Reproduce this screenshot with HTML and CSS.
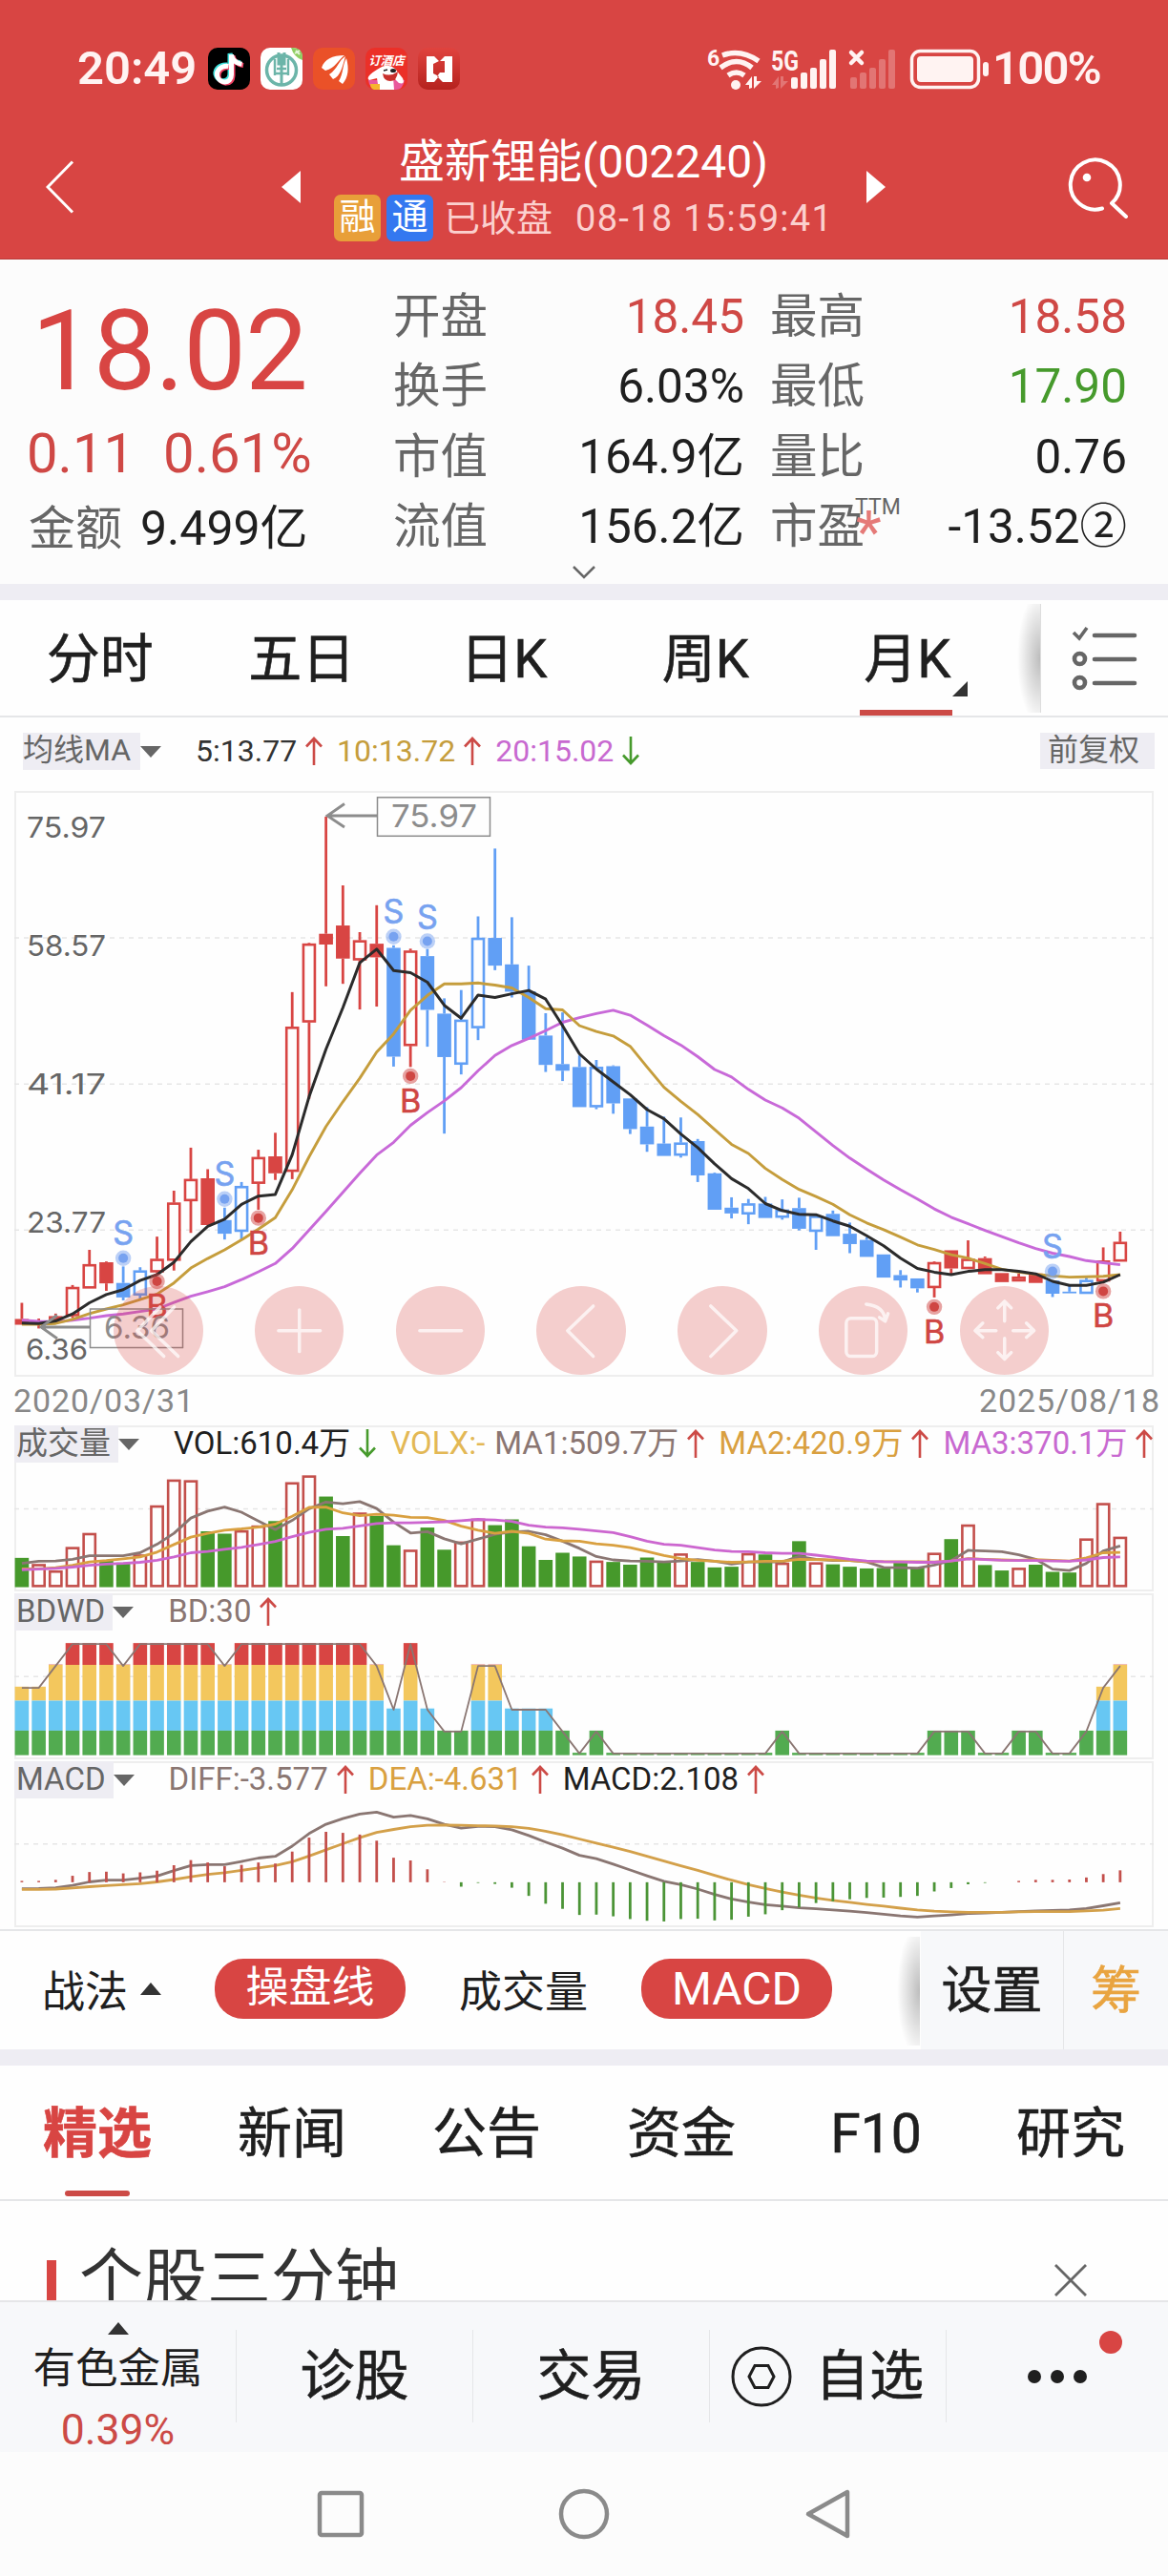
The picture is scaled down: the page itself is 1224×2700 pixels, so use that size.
FILE: index.html
```html
<!DOCTYPE html>
<html lang="zh-CN">
<head>
  <meta charset="UTF-8" />
  <title>盛新锂能(002240)</title>
  <link rel="stylesheet" href="styles.css">
</head>
<body>
  <!-- shared icons -->
  <svg class="defs">
    <symbol id="arrow-up" viewBox="0 0 18 30"><path d="M9 30V2M1 10.500L9 2l8 8.500" fill="none" stroke="#cc4a46" stroke-width="2.600"/></symbol>
    <symbol id="arrow-down" viewBox="0 0 18 30"><path d="M9 0v28M1 19.500L9 28l8-8.500" fill="none" stroke="#469a2c" stroke-width="2.600"/></symbol>
    <linearGradient id="red-app" x1="0" y1="0" x2="0" y2="1">
      <stop offset="0" stop-color="#e0433e"/><stop offset="1" stop-color="#b5221e"/>
    </linearGradient>
  </svg>

  <header class="header">
    <div class="status-bar">
      <span class="time">20:49</span>
      <div class="apps">
        <svg viewBox="0 0 44 44">
          <rect width="44" height="44" rx="10" fill="#000"/>
          <g fill="none" stroke-width="5">
            <path d="M21 19c-8-1-13 5-12 10 2 9 15 9 15-1V7c1 6 5 9 11 10" stroke="#3fe0dc" transform="translate(-1 -1)"/>
            <path d="M21 19c-8-1-13 5-12 10 2 9 15 9 15-1V7c1 6 5 9 11 10" stroke="#ef4063" transform="translate(2 1.500)"/>
            <path d="M21 19c-8-1-13 5-12 10 2 9 15 9 15-1V7c1 6 5 9 11 10" stroke="#fff" transform="translate(.5 .3)"/>
          </g>
        </svg>
        <svg viewBox="0 0 44 44">
          <rect width="44" height="44" rx="10" fill="#fff"/>
          <path d="M32 0h2q10 0 10 10v3Q35 10 32 0Z" fill="#8fce62"/>
          <path d="M36 6l5-3M37 3l4 4" stroke="#e5f5da" stroke-width="2"/>
          <circle cx="22" cy="23.500" r="15.500" fill="none" stroke="#6cb5a9" stroke-width="3.500"/>
          <path d="M19 5v12h6V5M22 8v31" fill="none" stroke="#6cb5a9" stroke-width="3"/>
          <path d="M15 12v17M29 12v17M15 27h14M17 22h10" fill="none" stroke="#6cb5a9" stroke-width="2.400"/>
        </svg>
        <svg viewBox="0 0 44 44">
          <rect width="44" height="44" rx="10" fill="#ea5128"/>
          <g fill="#fff">
            <path d="M9 21C12 12 20 8 33 8C26 13 24 21 13 24Z"/>
            <path d="M17 28C26 22 27 13 34 9C31 19 29 30 21 33Z"/>
            <path d="M27 35C32 27 31 17 35 11C38 22 37 31 31 38Z"/>
          </g>
        </svg>
        <svg viewBox="0 0 44 44">
          <rect width="44" height="44" rx="10" fill="#eb3028"/>
          <path d="M3 34h38q-2 10-9 10H11Q4 42 3 34Z" fill="#e9599c"/>
          <path d="M12 23Q23 15 31 22l8 10q3 7-4 5l-6-6 1 13H14l-2-12-8 2q-5-3 8-11Z" fill="#fff"/>
          <path d="M18 27q8 4 16-2-1 10-8 10t-8-8Z" fill="#c9302c"/>
          <ellipse cx="29" cy="24" rx="3" ry="2" fill="#222"/>
          <path d="M19 24l4-1" stroke="#222" stroke-width="1.500"/>
          <path d="M5 38h10v6H9q-4-1-4-6Z" fill="#f6b52e"/>
          <text x="22" y="18" font-size="12.500" text-anchor="middle" fill="#fff" font-weight="700" font-style="italic">订酒店</text>
        </svg>
        <svg viewBox="0 0 44 44">
          <rect width="44" height="44" rx="10" fill="url(#red-app)"/>
          <path d="M9 9h8l5 5-6 3v10l6 3-5 6H9ZM36 9h-8l-5 5h5v12h-5l-3 4 6 6h10Z" fill="#fff"/>
        </svg>
      </div>
      <svg class="signals" viewBox="0 0 310 60">
        <g fill="#fff3f2">
          <text x="11" y="27" font-size="23" font-weight="700">6</text>
          <text x="78" y="32" font-size="29" font-weight="700" textLength="29" lengthAdjust="spacingAndGlyphs">5G</text>
          <circle cx="41" cy="47" r="5"/>
          <path d="M58 50V38l-7 9h4v4zM60 38v13l8-8h-5v-5z"/>
          <rect x="99" y="39" width="7" height="12" rx="2"/>
          <rect x="109" y="34" width="7" height="17" rx="2"/>
          <rect x="119" y="29" width="7" height="22" rx="2"/>
          <rect x="129" y="20" width="7" height="31" rx="2"/>
          <rect x="139" y="10" width="7" height="41" rx="2"/>
          <rect x="231" y="17" width="59" height="27" rx="4"/>
          <rect x="300" y="23" width="6" height="15" rx="3"/>
        </g>
        <g fill="#fff3f2" opacity=".28">
          <path d="M86 50V38l-7 9h4v4zM88 38v13l8-8h-5v-5z"/>
          <rect x="161" y="39" width="7" height="12" rx="2"/>
          <rect x="171" y="34" width="7" height="17" rx="2"/>
          <rect x="181" y="29" width="7" height="22" rx="2"/>
          <rect x="191" y="20" width="7" height="31" rx="2"/>
          <rect x="201" y="10" width="7" height="41" rx="2"/>
        </g>
        <g fill="none" stroke="#fff3f2">
          <path d="M27 16Q46 9 65 22M25 29Q42 16 58 29M33 37Q42 31 50 37" stroke-width="5.500"/>
          <path d="M162 13l11 11M173 13l-11 11" stroke-width="4.500" stroke-linecap="round"/>
          <rect x="225.500" y="11.500" width="70" height="38" rx="9" stroke-width="3.500"/>
        </g>
      </svg>
      <span class="battery">100%</span>
    </div>
    <div class="title-bar">
      <svg class="back" viewBox="0 0 30 56"><path d="M28 1.500L2 28l26 26.500" fill="none" stroke="#fff" stroke-width="3"/></svg>
      <svg class="prev" viewBox="0 0 20 34"><path d="M20 0v34L0 17Z" fill="#fff"/></svg>
      <div class="title">
        <h1>盛新锂能(002240)</h1>
        <div class="subtitle">
          <span class="tag tag-margin">融</span>
          <span class="tag tag-connect">通</span>
          <span class="market-state">已收盘</span>
          <span class="market-time">08-18 15:59:41</span>
        </div>
      </div>
      <svg class="next" viewBox="0 0 20 34"><path d="M0 0v34l20-17Z" fill="#fff"/></svg>
      <svg class="search" viewBox="0 0 64 64">
        <path d="M36 53.500A26 26 0 1 1 46 48l15 14" fill="none" stroke="#fff" stroke-width="4" stroke-linecap="round" stroke-linejoin="round"/>
        <circle cx="20" cy="21" r="4.300" fill="#fff"/>
      </svg>
    </div>
  </header>

  <section class="quote">
    <div class="quote-main">
      <div class="price">18.02</div>
      <div class="change"><span>0.11</span><span>0.61%</span></div>
      <div class="amount"><label>金额</label><b>9.499亿</b></div>
    </div>
    <dl class="quote-col col-a">
      <div><dt>开盘</dt><dd class="up">18.45</dd></div>
      <div><dt>换手</dt><dd>6.03%</dd></div>
      <div><dt>市值</dt><dd>164.9亿</dd></div>
      <div><dt>流值</dt><dd>156.2亿</dd></div>
    </dl>
    <dl class="quote-col col-b">
      <div><dt>最高</dt><dd class="up">18.58</dd></div>
      <div><dt>最低</dt><dd class="down">17.90</dd></div>
      <div><dt>量比</dt><dd>0.76</dd></div>
      <div><dt>市盈<sup>TTM</sup><i>*</i></dt><dd>-13.52②</dd></div>
    </dl>
    <svg class="more" viewBox="0 0 24 14"><path d="M1 1l11 11L23 1" fill="none" stroke="#666" stroke-width="2.500"/></svg>
  </section>

  <nav class="period-tabs">
    <a>分时</a>
    <a>五日</a>
    <a>日K</a>
    <a>周K</a>
    <a class="active">月K</a>
    <div class="list-btn">
      <svg viewBox="0 0 70 68" fill="none" stroke="#666" stroke-width="4.600">
        <path d="M2 7l6 6L16 2" stroke-width="3.600"/>
        <path d="M24 10h42M24 35h42M24 60h42" stroke-linecap="round"/>
        <circle cx="8.500" cy="34.500" r="5.500"/><circle cx="8.500" cy="59.500" r="5.500"/>
      </svg>
    </div>
  </nav>

  <div class="ma-row">
    <span class="picker">均线MA</span><i class="caret"></i>
    <span class="val dark">5:13.77</span><svg class="arr"><use href="#arrow-up"/></svg>
    <span class="val gold">10:13.72</span><svg class="arr"><use href="#arrow-up"/></svg>
    <span class="val pink">20:15.02</span><svg class="arr"><use href="#arrow-down"/></svg>
    <span class="adjust">前复权</span>
  </div>

  <div class="kline">
    <svg id="kline-chart" viewBox="15 0 1194 614"></svg>
    <div class="tools">
      <button><svg viewBox="0 0 94 94"><path d="M49 22L25 47l28 27M64 22L40 47l28 27"/></svg></button>
      <button><svg viewBox="0 0 94 94"><path d="M25 47h44M47 25v44"/></svg></button>
      <button><svg viewBox="0 0 94 94"><path d="M25 47h44"/></svg></button>
      <button><svg viewBox="0 0 94 94"><path d="M60 21L33 47l27 27"/></svg></button>
      <button><svg viewBox="0 0 94 94"><path d="M35 21l27 26-27 27"/></svg></button>
      <button><svg viewBox="0 0 94 94"><rect x="29" y="34" width="32" height="40" rx="5"/><path d="M50 19q19 2 20 17M64 33l6 4 3-8"/></svg></button>
      <button><svg viewBox="0 0 94 94"><path d="M47 37V17M40 23l7-7 7 7M47 55v20M40 70l7 7 7-7M38 47H17M24 39l-8 8 8 7M56 47h20M70 39l8 8-8 7"/></svg></button>
    </div>
  </div>
  <div class="dates"><span>2020/03/31</span><span>2025/08/18</span></div>

  <div class="panel">
    <div class="panel-head">
      <span class="picker">成交量</span><i class="caret"></i>
      <span class="val black">VOL:610.4万</span><svg class="arr"><use href="#arrow-down"/></svg>
      <span class="val yellow">VOLX:-</span>
      <span class="val brown ma1">MA1:509.7万</span><svg class="arr"><use href="#arrow-up"/></svg>
      <span class="val orange">MA2:420.9万</span><svg class="arr"><use href="#arrow-up"/></svg>
      <span class="val pink">MA3:370.1万</span><svg class="arr"><use href="#arrow-up"/></svg>
    </div>
    <svg id="vol-chart" viewBox="15 39 1194 135"></svg>
  </div>

  <div class="panel">
    <div class="panel-head">
      <span class="picker">BDWD</span><i class="caret"></i>
      <span class="val brown">BD:30</span><svg class="arr"><use href="#arrow-up"/></svg>
    </div>
    <svg id="bdwd-chart" viewBox="15 39 1194 135"></svg>
  </div>

  <div class="panel">
    <div class="panel-head">
      <span class="picker">MACD</span><i class="caret"></i>
      <span class="val brown">DIFF:-3.577</span><svg class="arr"><use href="#arrow-up"/></svg>
      <span class="val orange">DEA:-4.631</span><svg class="arr"><use href="#arrow-up"/></svg>
      <span class="val black">MACD:2.108</span><svg class="arr"><use href="#arrow-up"/></svg>
    </div>
    <svg id="macd-chart" viewBox="15 39 1194 135"></svg>
  </div>

  <div class="indicator-bar">
    <span class="strategy">战法</span><i class="caret caret-up"></i>
    <span class="pill">操盘线</span>
    <span class="plain">成交量</span>
    <span class="pill pill-macd">MACD</span>
    <div class="indicator-side">
      <span>设置</span>
      <span class="chip">筹</span>
    </div>
  </div>

  <nav class="info-tabs">
    <a class="active">精选</a>
    <a>新闻</a>
    <a>公告</a>
    <a>资金</a>
    <a>F10</a>
    <a>研究</a>
  </nav>

  <section class="brief">
    <i class="mark"></i>
    <h2>个股三分钟</h2>
    <svg viewBox="0 0 34 34"><path d="M1 1l32 32M33 1L1 33" stroke="#666" stroke-width="2.800"/></svg>
  </section>

  <footer class="bottom-bar">
    <div class="sector">
      <i class="caret caret-up"></i>
      <span>有色金属</span>
      <em>0.39%</em>
    </div>
    <div>诊股</div>
    <div>交易</div>
    <div class="watch">
      <svg viewBox="0 0 64 64" fill="none" stroke="#1f1f1f" stroke-width="3">
        <circle cx="32" cy="32" r="30"/><path d="M25 20.500h14L45 32l-6 11.500H25L19 32Z"/>
      </svg>
      <span>自选</span>
    </div>
    <div class="dots">
      <svg viewBox="0 0 64 16" fill="#1f1f1f"><circle cx="8" cy="8" r="7"/><circle cx="32" cy="8" r="7"/><circle cx="56" cy="8" r="7"/></svg>
      <i class="badge"></i>
    </div>
  </footer>

  <div class="system-nav">
    <svg viewBox="0 0 56 56"><rect x="6" y="6" width="44" height="44" rx="2"/></svg>
    <svg viewBox="0 0 56 56"><circle cx="28" cy="28" r="24"/></svg>
    <svg viewBox="0 0 56 56"><path d="M49 5v46L8 28Z" stroke-linejoin="round"/></svg>
  </div>

  <script src="charts.js"></script>
</body>
</html>
```
FILE: styles.css
```css
* {
  box-sizing: border-box;
}
body {
  margin: 0;
  width: 1224px;
  height: 2700px;
  overflow: hidden;
  background: #fefefe;
  color: #1f1f1f;
  font-family: Roboto, "Noto Sans CJK SC", sans-serif;
}
h1, h2, dl, dd {
  margin: 0;
  font-weight: 400;
}
i, em {
  font-style: normal;
}
svg {
  display: block;
  flex: none;
}
svg.defs {
  position: absolute;
  width: 0;
  height: 0;
}

/* Header */
.header {
  height: 272px;
  background: #d84543;
  border-bottom: 1px solid #b93c3a;
  color: #fff;
}
.status-bar {
  height: 142px;
  display: flex;
  align-items: center;
  padding: 1px 0 0 81px;
  color: #fff3f2;
}
.time, .battery {
  font-size: 49px;
  font-weight: 600;
  line-height: 60px;
}
.time {
  width: 137px;
}
.apps {
  display: flex;
  gap: 11px;
  width: 512px;
}
.apps svg {
  width: 44px;
  height: 44px;
}
.signals {
  width: 310px;
  height: 60px;
}
.battery {
  letter-spacing: -1.8px;
}
.title-bar {
  height: 120px;
  display: flex;
  align-items: center;
  padding: 0 41px 0 48px;
}
.back {
  width: 30px;
  height: 56px;
  margin-bottom: 12px;
}
.prev, .next {
  width: 20px;
  height: 34px;
  margin-bottom: 12px;
}
.prev {
  margin-left: 217px;
}
.next {
  margin-right: 191px;
}
.title {
  flex: 1;
  text-align: center;
}
.title h1 {
  font-size: 48px;
  line-height: 58px;
  margin-top: -10px;
}
.subtitle {
  display: flex;
  align-items: center;
  margin: 5px 0 0 35px;
  font-size: 38px;
  line-height: 50px;
  color: #fbd0ce;
  white-space: nowrap;
}
.tag {
  width: 49px;
  height: 49px;
  border-radius: 7px;
  color: #fff;
  line-height: 47px;
  margin-right: 6px;
}
.tag-margin {
  background: #e89f39;
}
.tag-connect {
  background: #3478f0;
}
.market-state {
  margin-left: 5px;
}
.market-time {
  margin-left: 24px;
  letter-spacing: 1.3px;
}
.search {
  width: 64px;
  height: 64px;
  margin-bottom: 10px;
}

/* Quote summary */
.quote {
  position: relative;
  height: 340px;
  display: flex;
  background: #fcfcfc;
  color: #1f1f1f;
}
.quote-main {
  width: 412px;
  padding: 27px 0 0 30px;
}
.price {
  margin-left: 3px;
  font-size: 117px;
  line-height: 138px;
  letter-spacing: -1px;
  color: #d84543;
}
.change {
  display: flex;
  gap: 30px;
  height: 77px;
  margin-left: -2px;
  font-size: 58px;
  line-height: 77px;
  color: #cf4845;
}
.amount {
  display: flex;
  font-size: 50px;
  line-height: 81px;
}
.amount label {
  width: 117px;
  font-size: 49px;
  color: #666;
}
.amount b {
  font-weight: 400;
}
.quote-col {
  padding-top: 24px;
  font-size: 49.500px;
  line-height: 73.300px;
}
.quote-col > div {
  display: flex;
  justify-content: space-between;
}
.col-a {
  width: 368px;
}
.col-b {
  width: 374px;
  margin-left: 27px;
}
.quote-col dt {
  position: relative;
  color: #666;
}
.quote-col sup {
  position: absolute;
  left: 89px;
  top: 4px;
  font-size: 23px;
  line-height: 24px;
}
.quote-col i {
  position: absolute;
  left: 90px;
  top: 11px;
  font-size: 62px;
  line-height: 62px;
  color: #e57a78;
}
.up {
  color: #cf4845;
}
.down {
  color: #469a2c;
}
.more {
  position: absolute;
  left: 600px;
  top: 321px;
  width: 24px;
  height: 14px;
}

/* Period tabs */
.period-tabs {
  position: relative;
  height: 140px;
  display: flex;
  border-top: 17px solid #eeedf3;
  border-bottom: 2px solid #e5e6e8;
  font-size: 56px;
  line-height: 124px;
  text-align: center;
}
.period-tabs, .info-tabs, .indicator-side, .bottom-bar > div {
  -webkit-text-stroke: 0.6px;
}
.period-tabs a {
  width: 211.5px;
  position: relative;
  left: -1px;
}
.period-tabs .active::before {
  content: "";
  position: absolute;
  left: 56px;
  bottom: 0;
  width: 97px;
  height: 6px;
  background: #cc4a46;
}
.period-tabs .active::after {
  content: "";
  position: absolute;
  left: 153px;
  top: 85px;
  border-left: 16px solid transparent;
  border-bottom: 16px solid #333;
}
.list-btn {
  position: absolute;
  right: 0;
  top: 4px;
  width: 134px;
  height: 114px;
  border-left: 1px solid #ddd;
  background: #fefefe;
}
.list-btn::before,
.indicator-side::before {
  content: "";
  position: absolute;
  left: -25px;
  top: 0;
  width: 24px;
  height: 114px;
  background: radial-gradient(ellipse 24px 70px at right, rgba(0, 0, 0, 0.26), transparent);
}
.list-btn svg {
  width: 70px;
  height: 68px;
  margin: 23px 0 0 32px;
}

/* Indicator readouts */
.ma-row {
  height: 77px;
  display: flex;
  padding: 16px 14px 0 24px;
  font-size: 32px;
  line-height: 38px;
}
.picker {
  height: 39px;
  line-height: 37px;
  background: #eeedf3;
  color: #666;
}
.ma-row .picker {
  width: 123px;
}
.caret {
  flex: none;
  width: 0;
  height: 0;
  border: 11px solid transparent;
  border-top: 12px solid #666;
  border-bottom: 0;
}
.caret-up {
  border-top: 0;
  border-bottom: 13px solid #333;
}
.ma-row .caret, .panel-head .caret {
  margin-top: 14px;
}
.val {
  white-space: nowrap;
  margin-left: 15px;
}
.caret + .val {
  margin-left: 36px;
}
.arr {
  width: 18px;
  height: 30px;
  margin: 4px 0 0 9px;
}
.dark { color: #333; }
.black { color: #1f1f1f; }
.gold { color: #c59d3c; }
.yellow { color: #e3b855; }
.orange { color: #d9a040; }
.pink { color: #c869d0; }
.brown { color: #8a7672; }
.adjust {
  margin-left: auto;
  width: 120px;
  height: 38px;
  padding-left: 8px;
  background: #eeedf3;
  color: #666;
  line-height: 36px;
  white-space: nowrap;
}

/* Candles */
.kline {
  position: relative;
  height: 614px;
  margin: 0 15px;
  border: 2px solid #eee;
}
.kline > svg {
  width: 1194px;
  height: 614px;
  margin: -2px;
}
.kline text {
  font-family: Inter, sans-serif;
}
.tools {
  position: absolute;
  left: 102px;
  bottom: 0;
  display: flex;
  gap: 54.3px;
}
.tools button {
  width: 93.500px;
  height: 93.500px;
  padding: 0;
  border: 0;
  border-radius: 50%;
  background: rgba(216, 69, 67, 0.26);
}
.tools path, .tools rect {
  fill: none;
  stroke: #fff;
  stroke-opacity: 0.72;
  stroke-width: 3.500;
  stroke-linecap: round;
  stroke-linejoin: round;
}
.dates {
  height: 51px;
  display: flex;
  justify-content: space-between;
  padding: 0 8px 0 14px;
  font-size: 34px;
  line-height: 51px;
  letter-spacing: 0.9px;
  color: #888;
}

/* Sub charts */
.panel {
  height: 174px;
  margin: 0 15px 2px;
  box-shadow: inset 0 0 0 2px #eee;
}
.panel-head {
  display: flex;
  height: 39px;
  font-size: 33px;
  line-height: 38px;
}
.panel-head .picker {
  padding: 0 8px 0 2px;
}
.panel > svg {
  width: 1194px;
  height: 135px;
}
.panel-head .ma1 {
  margin-left: 10px;
}

/* Indicator switcher */
.indicator-bar {
  position: relative;
  height: 126px;
  display: flex;
  align-items: center;
  padding: 0 0 3px 44px;
  border-top: 2px solid #e5e6e8;
  font-size: 45px;
}
.indicator-bar .caret {
  margin-left: 13px;
}
.pill {
  height: 63px;
  width: 200px;
  margin-left: 56px;
  border-radius: 30px;
  background: #d84543;
  color: #fff;
  line-height: 61px;
  text-align: center;
}
.plain {
  margin-left: 56px;
}
.pill-macd {
  font-size: 48px;
  line-height: 63px;
}
.indicator-side {
  position: absolute;
  right: 0;
  top: 0;
  width: 259px;
  height: 124px;
  display: flex;
  background: #f7f8fa;
  font-size: 53px;
  line-height: 127px;
  text-align: center;
}
.indicator-side::before {
  top: 6px;
}
.indicator-side span:first-child {
  width: 150px;
  border-right: 1px solid #e5e6e8;
}
.indicator-side .chip {
  flex: 1;
  color: #e9a440;
}

/* Info tabs */
.info-tabs {
  height: 159px;
  display: flex;
  border-top: 17px solid #eeedf3;
  border-bottom: 2px solid #e5e6e8;
  font-size: 57px;
  line-height: 144px;
  text-align: center;
}
.info-tabs a {
  position: relative;
  width: 204px;
}
.info-tabs .active {
  font-weight: 700;
  color: #d84543;
}
.info-tabs .active::after {
  content: "";
  position: absolute;
  left: 68px;
  bottom: 3px;
  width: 68px;
  height: 6px;
  border-radius: 3px;
  background: #cc4a46;
}

/* Brief */
.brief {
  height: 104px;
  display: flex;
  overflow: hidden;
  padding: 0 85px 0 49px;
}
.mark {
  width: 10px;
  height: 60px;
  margin-top: 62px;
  background: #d84543;
}
.brief h2 {
  flex: 1;
  margin: 33px 0 0 24px;
  font-size: 67px;
  line-height: 98px;
  color: #333;
}
.brief svg {
  width: 34px;
  height: 34px;
  margin-top: 66px;
}

/* Bottom bar */
.bottom-bar {
  height: 159px;
  display: flex;
  background: #f7f8fa;
  border-top: 2px solid #e5e6e8;
  font-size: 57px;
  line-height: 97px;
  text-align: center;
}
.bottom-bar > div {
  position: relative;
  width: 248px;
  height: 97px;
  margin-top: 29px;
  border-right: 1px solid #e5e6e8;
}
.bottom-bar > .dots {
  width: 232px;
  border: 0;
}
.bottom-bar > .sector {
  display: flex;
  flex-direction: column;
  align-items: center;
  font-size: 44.500px;
  line-height: 64px;
  -webkit-text-stroke: 0;
}
.sector .caret {
  margin-top: -8px;
}
.sector span {
  margin-top: 4px;
}
.sector em {
  color: #cc4a46;
}
.watch {
  display: flex;
  align-items: center;
  padding-left: 22px;
}
.watch svg {
  width: 64px;
  height: 64px;
}
.watch span {
  margin-left: 24px;
}
.dots svg {
  width: 64px;
  height: 16px;
  margin: 41px 0 0 84px;
}
.badge {
  position: absolute;
  left: 160px;
  top: 1px;
  width: 24px;
  height: 24px;
  border-radius: 50%;
  background: #d84543;
}

/* System navigation */
.system-nav {
  height: 130px;
  display: flex;
  justify-content: center;
  align-items: center;
  gap: 199px;
  background: #fcfcfc;
}
.system-nav svg {
  width: 56px;
  height: 56px;
  fill: none;
  stroke: #8a8a8a;
  stroke-width: 4.500;
}
```
FILE: charts.js
```js
const STEP = 17.707;
const cx = (i) => 22.9 + STEP * i;
const RED = "#d84543", BLUE = "#619ff5", GREEN = "#46992b";

function line(x1, y1, x2, y2, color, width, extra = "") {
  return `<line x1="${x1}" y1="${y1}" x2="${x2}" y2="${y2}" stroke="${color}" stroke-width="${width}" ${extra}/>`;
}
function rect(x, y, w, h, fill, extra = "") {
  return `<rect x="${x}" y="${y}" width="${w}" height="${h}" fill="${fill}" ${extra}/>`;
}
function curve(values, y, color, width) {
  const pts = values.map((v, i) => `${cx(i).toFixed(1)},${y(v).toFixed(1)}`).join(" ");
  return `<polyline points="${pts}" fill="none" stroke="${color}" stroke-width="${width}" stroke-linejoin="round"/>`;
}
function grid(y) {
  return line(15, y, 1209, y, "#e6e6e6", 1.5, 'stroke-dasharray="5 5"');
}
function label(x, y, text, size, color, width) {
  return `<text x="${x}" y="${y}" font-size="${size}" fill="${color}" textLength="${width}" lengthAdjust="spacingAndGlyphs">${text}</text>`;
}

// [kind, body top, body bottom, high, low]; r/b = hollow, R/B = filled
const candles = [
  ["R",1297,1311,1258,1311],["R",1304,1312,1296,1320],["R",1290,1300,1284,1300],["r",1220,1290,1215,1295],
  ["r",1165,1223,1130,1223],["R",1160,1211,1158,1229],["B",1210,1245,1170,1252],["b",1180,1240,1172,1248],
  ["r",1152,1184,1098,1187],["r",1016,1156,987,1180],["r",959,1012,883,1089],["R",957,1070,935,1070],
  ["B",1058,1091,1028,1105],["b",976,1086,966,1105],["r",906,970,888,1033],["R",904,945,847,961],
  ["r",591,941,507,959],["r",390,580,388,765],["R",366,392,83,493],["R",346,426,249,487],
  ["r",382,430,362,549],["R",390,423,297,542],["B",400,663,394,687],["r",407,637,402,688],
  ["B",420,550,403,639],["B",559,664,522,849],["b",574,682,502,706],["b",376,594,324,623],
  ["B",376,443,160,454],["B",440,506,326,520],["B",505,622,443,622],["B",612,683,558,700],
  ["B",681,697,556,722],["B",688,785,660,785],["b",688,785,671,790],["B",686,776,684,801],
  ["B",764,838,764,850],["B",832,875,785,893],["B",873,903,808,903],["b",871,902,810,907],
  ["B",867,950,862,966],["B",945,1033,943,1033],["B",1028,1042,1003,1054],["b",1018,1044,1007,1068],
  ["B",1018,1053,1002,1053],["b",1033,1052,1008,1057],["B",1029,1079,1004,1083],["b",1048,1086,1045,1130],
  ["B",1043,1097,1035,1097],["B",1091,1116,1064,1138],["B",1106,1147,1100,1147],["B",1141,1197,1141,1197],
  ["B",1191,1204,1179,1221],["B",1199,1223,1199,1233],["r",1160,1222,1158,1245],["R",1131,1175,1131,1188],
  ["r",1152,1176,1107,1176],["R",1150,1189,1146,1189],["R",1186,1208,1186,1208],["r",1195,1206,1187,1206],
  ["R",1187,1210,1187,1210],["B",1204,1236,1204,1244],["B",1231,1235,1217,1235],["b",1203,1236,1197,1236],
  ["r",1156,1206,1124,1206],["r",1111,1158,1086,1158]
];
const ma5 = [1307,1308,1302,1285,1258,1238,1226,1204,1190,1160,1110,1073,1056,1020,1000,996,900,760,645,545,436,403,455,460,483,539,570,514,520,511,503,524,588,656,693,724,755,791,813,850,883,922,958,982,1018,1035,1044,1045,1060,1073,1096,1120,1150,1175,1184,1190,1182,1178,1178,1182,1188,1206,1216,1216,1208,1190];
const ma10 = [1310,1310,1308,1298,1284,1273,1263,1250,1237,1210,1174,1151,1130,1106,1080,1052,985,905,832,772,715,652,608,551,515,487,487,485,490,497,520,547,550,588,602,613,638,688,737,771,803,839,875,897,933,960,984,1001,1020,1045,1065,1081,1099,1118,1129,1142,1150,1163,1177,1184,1189,1193,1196,1195,1194,1190];
const ma20 = [1300,1303,1304,1300,1295,1289,1285,1279,1273,1257,1242,1231,1219,1202,1183,1163,1127,1082,1037,991,945,901,870,829,798,770,738,697,660,636,619,600,580,569,559,551,563,587,612,635,663,694,712,742,768,787,812,845,878,908,935,961,985,1007,1031,1051,1067,1083,1098,1113,1127,1138,1146,1156,1161,1166];
// [kind, index, dot, text centre]
const signals = [
  ["S",6,1150,1088],["S",12,1007,945],["S",22,373,311],["S",24,384,323],["S",61,1182,1120],
  ["B",8,1206,1264],["B",14,1053,1112],["B",23,710,768],["B",54,1268,1326],["B",64,1230,1289]
];

function drawKline() {
  const y = (v) => v / 2.306 - 9;
  let s = grid(y(376)) + grid(y(729)) + grid(y(1082));

  candles.forEach(([kind, top, bottom, high, low], i) => {
    const color = kind.toLowerCase() === "r" ? RED : BLUE;
    const x = cx(i);
    const t = y(top), b = y(bottom);
    s += line(x, y(high), x, t, color, 2.8) + line(x, b, x, y(low), color, 2.8);
    if (kind === "r" || kind === "b") {
      s += rect(x - 6, t + 1, 12, Math.max(b - t - 2, 1), "#fefefe", `stroke="${color}" stroke-width="2.6"`);
    } else {
      s += rect(x - 7.3, t, 14.6, b - t, color);
    }
  });

  [["75.97",877.7],["58.57",1002],["41.17",1147],["23.77",1291.5]].forEach(([t, py]) => {
    s += label(28, py - 829, t, 30, "#666", 83);
  });
  s += label(27, 1425 - 829, "6.36", 30, "#666", 65);

  s += curve(ma20, y, "#c869d8", 2.9) + curve(ma10, y, "#c59d3c", 2.9) + curve(ma5, y, "#2b2b2b", 3);

  signals.forEach(([kind, i, dot, text]) => {
    const color = kind === "S" ? "#77a2f0" : "#cf4643";
    s += `<circle cx="${cx(i)}" cy="${y(dot)}" r="8.2" fill="${color}" opacity=".5"/>`;
    s += `<circle cx="${cx(i)}" cy="${y(dot)}" r="5" fill="${color}"/>`;
    s += `<text x="${cx(i)}" y="${y(text) + 12.5}" font-size="34" text-anchor="middle" fill="${color}" stroke="${color}" stroke-width=".6">${kind}</text>`;
  });

  // high / low callouts
  s += `<g fill="none" stroke="#8c8c8c" stroke-width="2.8">
    <path d="M395 26H343M361 13.500L343 26l18 12"/>
    <path d="M94 562H43M60 549.500L43 562l17 12"/>
    <rect x="395.500" y="6.800" width="118" height="40.500" stroke-width="1.500"/>
    <rect x="94.500" y="543" width="97" height="40.500" stroke-width="1.500"/></g>`;
  s += label(410, 37.8, "75.97", 33, "#8c8c8c", 90) + label(109, 574, "6.36", 33, "#8c8c8c", 69);
  document.getElementById("kline-chart").innerHTML = s;
}

const volumes = "g428 r446 r465 r396 r355 g435 g442 r418 r274 r198 r200 g350 g357 r347 r333 g320 r206 r186 g248 g364 r295 g305 g391 r404 g339 g404 r380 r313 g332 g315 g394 g434 g413 g424 r436 g440 g448 g427 g440 r415 g440 g456 g454 r414 g418 r442 g379 r441 g447 g454 g459 g458 g440 g456 r413 g373 r330 g449 g465 r457 g448 g469 g471 r371 r267 r366".split(" ");
const vma1 = [444,438,437,432,422,422,422,413,388,356,311,291,279,294,320,345,318,284,264,269,263,283,323,355,351,372,387,373,359,352,350,360,379,400,424,434,437,438,440,437,433,438,446,440,440,440,424,432,436,436,440,456,457,458,449,436,406,408,410,419,432,461,465,444,408,393];
const vma2 = [460,460,457,450,440,436,431,425,411,389,367,356,347,343,338,329,306,280,279,296,304,300,303,309,310,318,335,347,356,350,356,373,378,379,387,391,398,409,421,430,435,438,441,440,438,438,432,433,434,436,439,439,439,439,440,437,430,432,434,435,433,435,437,428,413,412];
const vma3 = [463,461,459,455,450,446,444,441,435,425,413,409,403,397,389,380,366,353,344,341,334,327,325,325,324,322,319,315,317,321,332,338,340,344,349,354,366,379,388,391,398,405,409,410,413,415,415,420,426,432,437,439,440,441,441,437,431,433,435,436,436,437,438,434,427,425];

function drawVolume() {
  const y = (v) => v / 2.8 - 14;
  const base = y(514);
  let s = grid(y(284));
  volumes.forEach((v, i) => {
    const t = y(Number(v.slice(1)));
    s += v[0] === "g"
      ? rect(cx(i) - 7.3, t, 14.6, base - t, GREEN)
      : rect(cx(i) - 6.1, t + 1.2, 12.2, base - t - 2.4, "#fefefe", 'stroke="#c34f4b" stroke-width="2.6"');
  });
  s += curve(vma1, y, "#8a7672", 2.8) + curve(vma2, y, "#d9a040", 2.8) + curve(vma3, y, "#cc66cf", 2.8);
  document.getElementById("vol-chart").innerHTML = s;
}

const levels = [..."334555455555455555555425211442221010000000000100000000111001100134"].map(Number);

function drawBdwd() {
  const y = (v) => v / 2.8 - 190;
  const bands = [[678, 742, RED], [742, 847, "#f3c75d"], [847, 935, "#67c7f3"], [935, 1007, "#52ab50"]];
  const tops = [1000, 935, 870, 806, 741, 678];
  let s = grid(y(776));
  levels.forEach((lv, i) => {
    bands.forEach(([top, bottom, color]) => {
      const t = Math.max(top, tops[lv]);
      if (t < bottom) s += rect(cx(i) - 7.3, y(t), 14.6, (bottom - t) / 2.8, color);
    });
  });
  s += curve(levels.map((lv) => 1002 - lv * 64.2), y, "#8a7672", 1.8);
  document.getElementById("bdwd-chart").innerHTML = s;
}

const macd = [1376,1376,1373,1361,1350,1349,1354,1351,1346,1330,1315,1322,1333,1329,1322,1325,1290,1249,1232,1235,1240,1258,1308,1316,1342,1379,1393,1382,1385,1396,1420,1443,1458,1476,1475,1480,1488,1493,1495,1488,1487,1492,1490,1481,1474,1462,1454,1441,1436,1430,1426,1425,1423,1420,1407,1397,1386,1382,1380,1376,1373,1373,1372,1366,1356,1345];
const diff = [1399,1398,1396,1389,1379,1374,1374,1368,1362,1346,1331,1328,1328,1319,1309,1304,1274,1237,1210,1193,1180,1174,1189,1184,1194,1210,1221,1216,1217,1226,1243,1262,1280,1301,1311,1327,1344,1361,1377,1387,1400,1416,1429,1438,1446,1450,1455,1458,1461,1465,1469,1474,1479,1482,1479,1476,1472,1470,1468,1466,1464,1463,1461,1457,1449,1440];
const dea = [1401,1401,1400,1397,1393,1390,1387,1384,1379,1372,1364,1357,1352,1345,1338,1331,1320,1303,1285,1267,1249,1234,1225,1217,1213,1212,1213,1214,1215,1217,1222,1230,1241,1253,1265,1277,1290,1304,1318,1332,1345,1360,1374,1387,1398,1409,1418,1426,1433,1439,1445,1450,1456,1461,1465,1467,1468,1468,1468,1467,1466,1466,1466,1464,1462,1457];

function drawMacd() {
  const y = (v) => v / 2.8 - 366;
  let s = grid(y(1268));
  s += curve(diff, y, "#8a7672", 2.8) + curve(dea, y, "#d3a04a", 2.8);
  macd.forEach((v, i) => {
    s += line(cx(i), y(1380), cx(i), y(v), v < 1380 ? "#c34f4b" : "#4b9436", 2.8);
  });
  document.getElementById("macd-chart").innerHTML = s;
}

drawKline();
drawVolume();
drawBdwd();
drawMacd();
```
